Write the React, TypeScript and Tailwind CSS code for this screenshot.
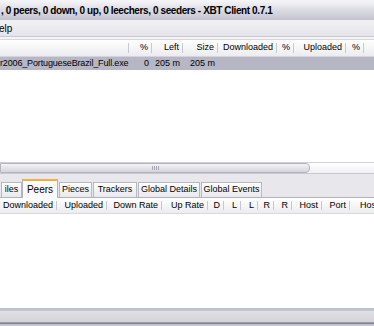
import React from "react";

const topCols = [
  { label: "", w: 129, align: "left" },
  { label: "%", w: 23 },
  { label: "Left", w: 31 },
  { label: "Size", w: 35 },
  { label: "Downloaded", w: 59 },
  { label: "%", w: 17 },
  { label: "Uploaded", w: 52 },
  { label: "%", w: 18 },
  { label: "", w: 20 },
];

const row = ["r2006_PortugueseBrazil_Full.exe", "0", "205 m", "205 m", "", "", "", "", ""];

const tabs = [
  { t: "iles", w: 21 },
  { t: "Peers", w: 36 },
  { t: "Pieces", w: 33 },
  { t: "Trackers", w: 44 },
  { t: "Global Details", w: 62 },
  { t: "Global Events", w: 61 },
];

const peerCols = [
  { label: "Downloaded", w: 57 },
  { label: "Uploaded", w: 50 },
  { label: "Down Rate", w: 55 },
  { label: "Up Rate", w: 46 },
  { label: "D", w: 16 },
  { label: "L", w: 17 },
  { label: "L", w: 17 },
  { label: "R", w: 16 },
  { label: "R", w: 18 },
  { label: "Host", w: 30 },
  { label: "Port", w: 28 },
  { label: "Host", w: 40, align: "left" },
];

export default function App() {
  return (
    <div
      className="w-[374px] h-[326px] overflow-hidden bg-white flex flex-col text-[9px] text-black"
      style={{ fontFamily: '"Liberation Sans", Arial, sans-serif' }}
    >
      {/* title */}
      <div className="h-[20px] shrink-0 flex items-center whitespace-nowrap bg-gradient-to-b from-[#f6f6fa] via-[#dcdce4] to-[#c4c4d0] pl-[1px] font-bold text-[10px] tracking-[-0.4px]">
        , 0 peers, 0 down, 0 up, 0 leechers, 0 seeders - XBT Client 0.7.1
      </div>
      {/* menu */}
      <div className="h-[17px] shrink-0 flex items-center bg-gradient-to-b from-[#f0f0f4] to-[#e4e4ea] border-b border-[#c8c8d0] text-[10px]">
        <span className="-ml-[1px]">elp</span>
      </div>
      <div className="h-[3px] shrink-0 bg-[#f4f4f6] border-b border-[#d8d8de]" />
      {/* top list */}
      <div className="flex-1 flex flex-col min-h-0">
        <div className="h-[17px] shrink-0 flex bg-gradient-to-b from-white to-[#ececf0] border-b border-[#d4d4dc] whitespace-nowrap">
          {topCols.map((c, i) => (
            <div
              key={i}
              style={{ width: c.w }}
              className={`shrink-0 flex items-center pr-[3px] ${c.align === "left" ? "justify-start" : "justify-end"} border-r border-[#c8c8d0] my-[3px]`}
            >
              {c.label}
            </div>
          ))}
        </div>
        <div className="h-[13px] shrink-0 flex bg-[#b6b6c4] whitespace-nowrap">
          {topCols.map((c, i) => (
            <div
              key={i}
              style={{ width: c.w }}
              className={`shrink-0 flex items-center pr-[3px] ${i === 0 ? "justify-start tracking-[-0.15px]" : "justify-end"}`}
            >
              {row[i]}
            </div>
          ))}
        </div>
        <div className="flex-1" />
        {/* h scrollbar */}
        <div className="h-[11px] shrink-0 flex bg-white border-t border-[#d0d0d8]">
          <div className="w-[310px] h-full rounded-r-[4px] bg-gradient-to-b from-[#f4f4f6] to-[#d4d4dc] border border-[#b4b4c0] flex items-center justify-center">
            <div className="flex gap-[1px]">
              <span className="w-[1px] h-[4px] bg-[#a8a8b4]" />
              <span className="w-[1px] h-[4px] bg-[#a8a8b4]" />
              <span className="w-[1px] h-[4px] bg-[#a8a8b4]" />
              <span className="w-[1px] h-[4px] bg-[#a8a8b4]" />
            </div>
          </div>
          <div className="flex-1 bg-gradient-to-b from-white to-[#f0f0f4]" />
        </div>
      </div>
      {/* tabs */}
      <div className="h-[24px] shrink-0 bg-[#e8e8ec] flex items-end border-t border-[#c8c8d0] whitespace-nowrap">
        {tabs.map(({ t, w }) =>
          t === "Peers" ? (
            <div
              key={t}
              style={{ width: w }}
              className="shrink-0 h-[19px] flex items-center justify-center bg-[#fbfbfb] border-x border-[#b0b0bc] border-t-[2px] border-t-[#f0b040] -mb-[1px] relative z-10 text-[10px]"
            >
              {t}
            </div>
          ) : (
            <div
              key={t}
              style={{ width: w }}
              className="shrink-0 h-[15px] ml-[1px] flex items-center justify-center bg-gradient-to-b from-white to-[#e8e8ee] border border-b-0 border-[#b8b8c4] overflow-hidden"
            >
              {t}
            </div>
          )
        )}
      </div>
      {/* bottom list */}
      <div className="h-[111px] shrink-0 flex flex-col border-t border-[#b0b0bc]">
        <div className="h-[16px] shrink-0 flex bg-gradient-to-b from-white to-[#ececf0] border-b border-[#d8d8de] whitespace-nowrap">
          {peerCols.map((c, i) => (
            <div
              key={i}
              style={{ width: c.w }}
              className={`shrink-0 flex items-center pr-[3px] border-r border-[#c8c8d0] my-[3px] ${c.align === "left" ? "justify-start pl-[10px]" : "justify-end"}`}
            >
              {c.label}
            </div>
          ))}
        </div>
        <div className="flex-1" />
      </div>
      {/* status */}
      <div className="h-[18px] shrink-0 flex flex-col">
        <div className="h-[2px] bg-[#b8c6cc]" />
        <div className="h-[1px] bg-[#c8c8cc]" />
        <div className="flex-1 bg-gradient-to-b from-[#e0e0e4] to-[#d4d4d8]" />
        <div className="h-[1px] bg-[#9c9cac]" />
        <div className="h-[1px] bg-[#80809a]" />
        <div className="h-[2px] bg-[#c4c4d0]" />
      </div>
    </div>
  );
}
